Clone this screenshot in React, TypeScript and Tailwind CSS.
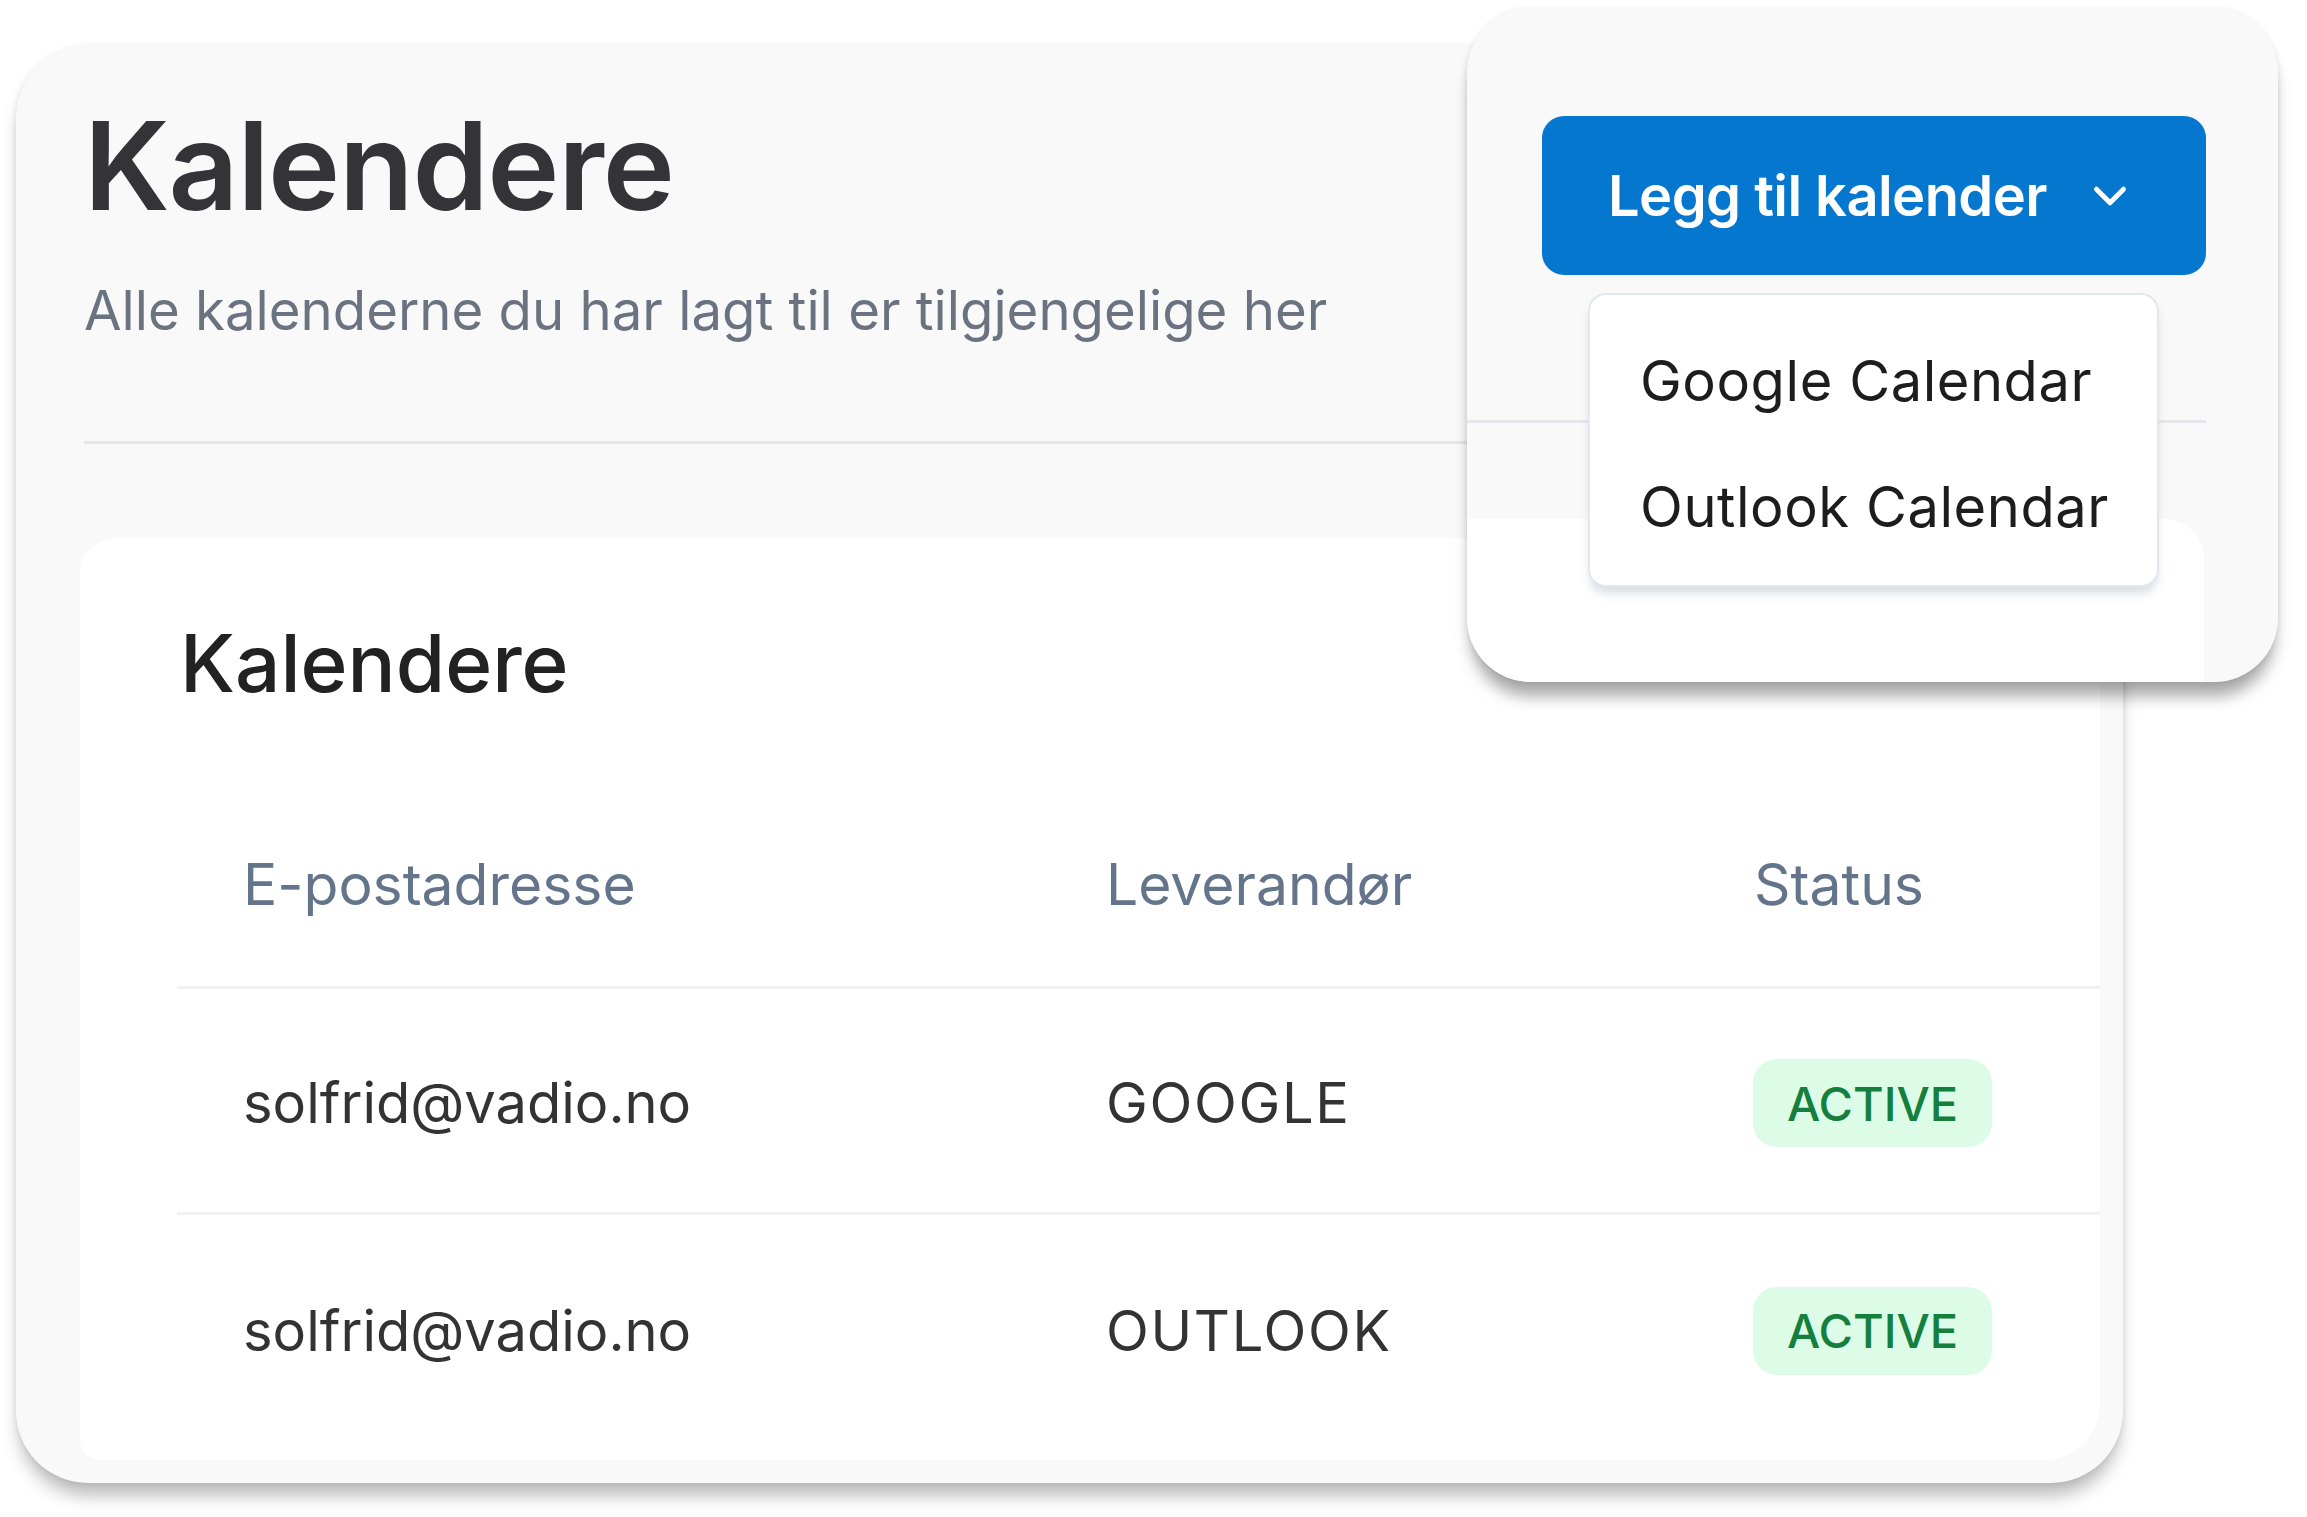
import { ChevronDown } from 'lucide-react';

export default function App() {
  const calendars = [
    { email: 'solfrid@vadio.no', provider: 'GOOGLE', status: 'ACTIVE' },
    { email: 'solfrid@vadio.no', provider: 'OUTLOOK', status: 'ACTIVE' },
  ];

  return (
    <div className="relative w-[2307px] h-[1517px] bg-white overflow-hidden font-['Inter',sans-serif]">
      {/* Main card */}
      <div className="ml-[16px] pt-[46px]">
        <div className="w-[2107px] h-[1437px] rounded-[72px] bg-[#f9f9f9] shadow-[0_16px_18px_-4px_rgba(0,0,0,0.28),0_0_6px_rgba(0,0,0,0.08)] flex flex-col">
          {/* Header */}
          <div className="pl-[68px] pt-[59px]">
            <h1 className="text-[122px] leading-none font-semibold tracking-[-0.01em] text-[#333338]">Kalendere</h1>
            <p className="mt-[56px] text-[54.5px] leading-none text-[#6b7280]">
              Alle kalenderne du har lagt til er tilgjengelige her
            </p>
          </div>
          <div className="ml-[68px] mt-[103px] h-[3px] bg-[#e5e7eb]" />

          {/* Table card */}
          <div className="ml-[64px] mt-[94px] w-[2020px] h-[922px] bg-white rounded-tl-[36px] rounded-tr-[36px] rounded-bl-[20px] rounded-br-[56px] pl-[97px] pt-[85px]">
            <h2 className="ml-[3px] text-[80px] leading-none font-medium text-[#222]">Kalendere</h2>

            <div className="mt-[86px] grid grid-cols-[863px_648px_1fr] text-[57px] leading-none">
              <div className="h-[200px] flex items-center pb-[6px] pl-[66px] text-[#64748b] border-b-[3px] border-[#f1f1f3]">E-postadresse</div>
              <div className="h-[200px] flex items-center pb-[6px] pl-[66px] text-[#64748b] border-b-[3px] border-[#f1f1f3]">Leverandør</div>
              <div className="h-[200px] flex items-center pb-[6px] pl-[66px] text-[#64748b] border-b-[3px] border-[#f1f1f3]">Status</div>

              {calendars.map((c, i) => (
                <>
                  <div key={`e${i}`} className={`h-[226px] flex items-center pt-[6px] pl-[66px] text-[56px] text-[#333] ${i === 0 ? 'border-b-[3px] border-[#f1f1f3]' : ''}`}>
                    {c.email}
                  </div>
                  <div key={`p${i}`} className={`h-[226px] flex items-center pt-[6px] pl-[66px] text-[56px] text-[#333] tracking-[0.03em] ${i === 0 ? 'border-b-[3px] border-[#f1f1f3]' : ''}`}>
                    {c.provider}
                  </div>
                  <div key={`s${i}`} className={`h-[226px] flex items-center pt-[6px] pl-[65px] ${i === 0 ? 'border-b-[3px] border-[#f1f1f3]' : ''}`}>
                    <span className="w-[239px] h-[88px] rounded-[24px] bg-[#dcfce7] text-[#15803d] text-[47px] font-medium flex items-center justify-center">
                      {c.status}
                    </span>
                  </div>
                </>
              ))}
            </div>
          </div>
        </div>
      </div>

      {/* Zoomed callout of the add-calendar menu */}
      <div className="absolute left-[1467px] top-[9px] w-[811px] h-[673px] rounded-[64px] bg-[#f9f9f9] overflow-hidden shadow-[0_18px_16px_-4px_rgba(0,0,0,0.35),0_0_6px_rgba(0,0,0,0.08)] flex flex-col">
        <div className="pl-[75px] pt-[107px]">
          <button className="w-[664px] h-[159px] rounded-[22px] bg-[#0577cf] text-white flex items-center pl-[66px] gap-[36px]">
            <span className="text-[56px] leading-none font-semibold tracking-[-0.01em]">Legg til kalender</span>
            <ChevronDown className="w-[54px] h-[54px]" strokeWidth={2.2} />
          </button>
        </div>
        <div className="mt-[145px] w-[739px] h-[3px] bg-[#e5e7eb]" />
        <div className="mt-[96px] w-[737px] flex-1 bg-white rounded-tr-[40px]" />

        {/* Dropdown menu */}
        <div className="absolute left-[121px] top-[284px] w-[571px] h-[294px] rounded-[18px] bg-white border-2 border-[#e2e8f0] shadow-[0_8px_10px_-2px_rgba(100,116,139,0.25)] pt-[23px] pl-[50px] text-[56px] leading-none tracking-[0.01em] text-[#1d1d1f]">
          <div className="h-[126px] flex items-center">Google Calendar</div>
          <div className="h-[126px] flex items-center">Outlook Calendar</div>
        </div>
      </div>
    </div>
  );
}
